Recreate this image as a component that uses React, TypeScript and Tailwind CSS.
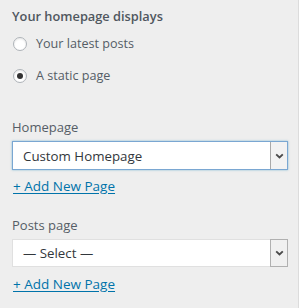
import React from "react";

const font = { fontFamily: '"Open Sans", "Noto Sans", "Liberation Sans", sans-serif' };

const Chevron = () => (
  <svg width="9" height="6" viewBox="0 0 9 6" aria-hidden="true">
    <path d="M1.2 1.4 L4.5 4.5 L7.8 1.4" fill="none" stroke="#4a4a4a" strokeWidth="1.9" />
  </svg>
);

const Radio = ({ checked, label }: { checked?: boolean; label: string }) => (
  <label className="flex h-5 items-center gap-[9px]">
    <span className="ml-[1px] flex h-[14px] w-[14px] items-center justify-center rounded-full border border-[#aeb3b8] bg-white shadow-[inset_0_1px_2px_rgba(0,0,0,0.1)]">
      {checked && <span className="h-[6px] w-[6px] rounded-full bg-[#333]" />}
    </span>
    <span className="text-[12.6px] text-[#555d66]">{label}</span>
  </label>
);

const FakeSelect = ({ value, focused }: { value: string; focused?: boolean }) => (
  <div
    className={
      focused
        ? "flex h-[29px] w-[276px] border border-[#7aa7d2] bg-white shadow-[0_0_2px_rgba(30,140,190,0.5)]"
        : "flex h-[28px] w-[276px] border border-[#e0e0e0] bg-white"
    }
  >
    <span className="flex flex-1 items-center pl-[10px] text-[13.3px] text-[#32373c]">{value}</span>
    <span
      className={
        focused
          ? "flex w-[17px] items-center justify-center border-l border-[#a9a9a9] bg-[#f2f2f2]"
          : "-my-px -mr-px flex w-[18px] items-center justify-center border border-[#b0b0b0] bg-[#f0f0f0]"
      }
    >
      <Chevron />
    </span>
  </div>
);

const AddLink = ({ className }: { className: string }) => (
  <a href="#" className={`block h-5 pl-[1px] text-[13.5px] leading-5 text-[#0073aa] underline underline-offset-2 ${className}`}>
    + Add New Page
  </a>
);

export default function App() {
  return (
    <div className="h-[308px] w-[300px] bg-white" style={font}>
      <div className="h-[308px] w-[299px] border-r border-[#dcdcdc] bg-[#eeeeee] px-3 pt-[6px] leading-5">
        <p className="h-5 text-[12.8px] font-semibold text-[#50575e]">Your homepage displays</p>
        <div className="mt-2 flex flex-col gap-3">
          <Radio label="Your latest posts" />
          <Radio checked label="A static page" />
        </div>

        <p className="mt-[31px] h-5 text-[13px] text-[#555d66]">Homepage</p>
        <div className="mt-1">
          <FakeSelect focused value="Custom Homepage" />
        </div>
        <AddLink className="mt-[6px]" />

        <p className="mt-[19px] h-5 text-[13px] text-[#555d66]">Posts page</p>
        <div className="mt-[4px]">
          <FakeSelect value="— Select —" />
        </div>
        <AddLink className="mt-[7px]" />
      </div>
    </div>
  );
}
